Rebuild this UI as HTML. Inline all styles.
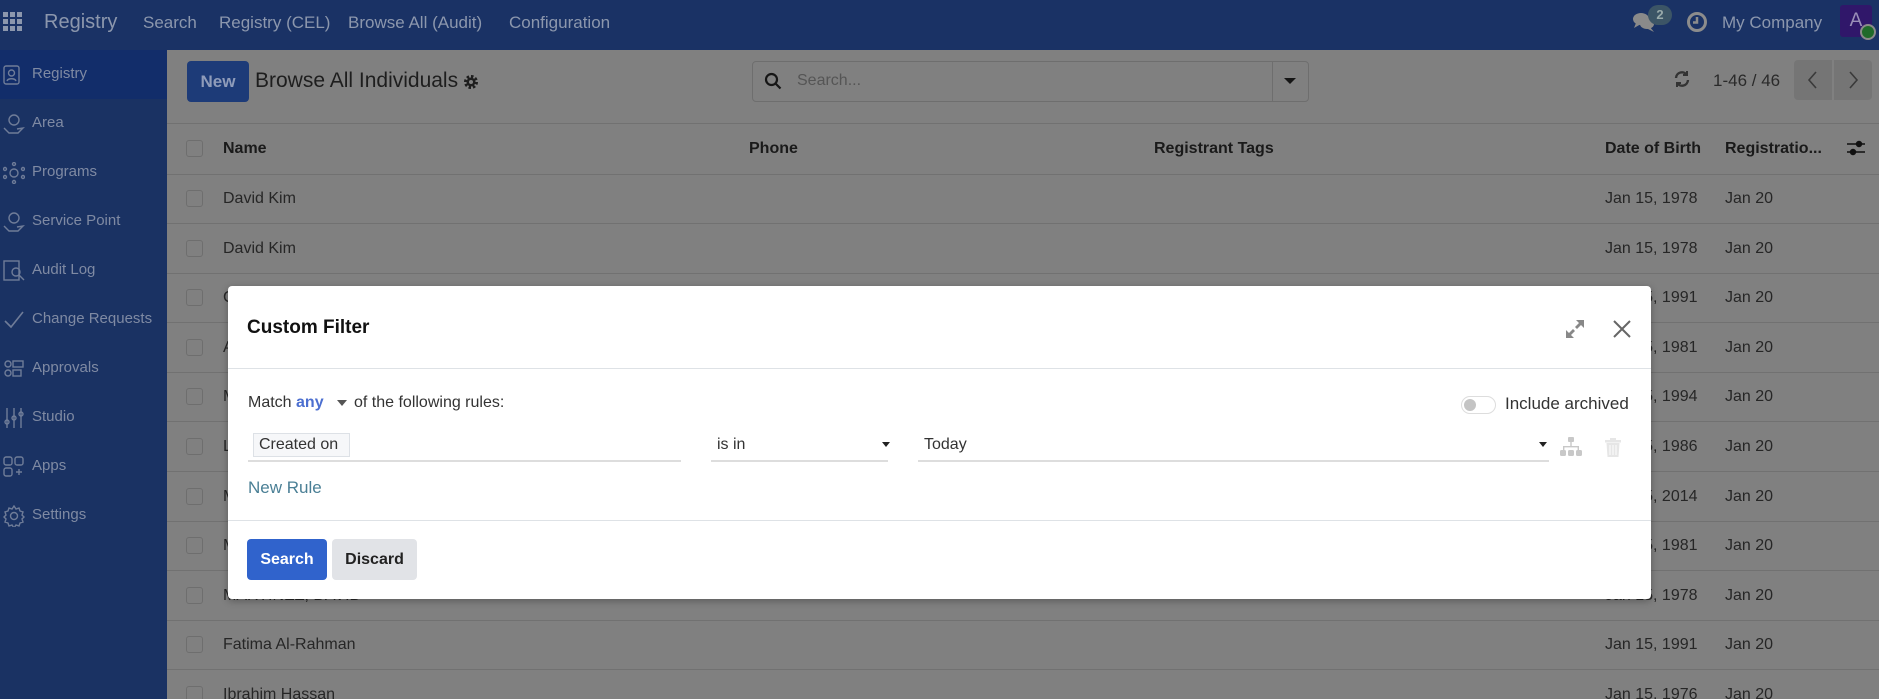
<!DOCTYPE html>
<html><head><meta charset="utf-8"><style>
*{box-sizing:border-box;margin:0;padding:0}
html{width:1879px;height:699px;overflow:hidden}
body{width:1879px;height:699px;overflow:hidden;background:#808080;font-family:"Liberation Sans",sans-serif;font-size:16px;color:#1a1a1a;position:relative}
.a{position:absolute;white-space:nowrap}
.nav{left:0;top:0;width:1879px;height:50px;background:#1a3265}
.nav .t{color:#8c97ad;font-size:17px;top:13px}
.side{left:0;top:50px;width:167px;height:649px;background:#1a3263}
.si{left:0;width:167px;height:49px;color:#7f8aa3;font-size:15px}
.si span{position:absolute;left:32px;top:15px}
.si svg{position:absolute;left:3px;top:14px}
.line{left:167px;width:1712px;height:1px;background:#717171}
.cb{width:17px;height:17px;border:1px solid #6e6e6e;border-radius:3px}
.row{font-size:16px;color:#262626}
.modal{left:228px;top:286px;width:1423px;height:313px;background:#fff;border-radius:4px;box-shadow:0 2px 8px rgba(0,0,0,.3)}
</style></head><body>
<div class="a nav">
<svg class="a" style="left:3px;top:12px" width="20" height="20" viewBox="0 0 20 20" fill="#8c97ad"><rect x="0" y="0" width="5" height="5"/><rect x="7" y="0" width="5" height="5"/><rect x="14" y="0" width="5" height="5"/><rect x="0" y="7" width="5" height="5"/><rect x="7" y="7" width="5" height="5"/><rect x="14" y="7" width="5" height="5"/><rect x="0" y="14" width="5" height="5"/><rect x="7" y="14" width="5" height="5"/><rect x="14" y="14" width="5" height="5"/></svg>
<div class="a t" style="left:44px;top:11px;font-size:20px">Registry</div>
<div class="a t" style="left:143px">Search</div>
<div class="a t" style="left:219px">Registry (CEL)</div>
<div class="a t" style="left:348px">Browse All (Audit)</div>
<div class="a t" style="left:509px">Configuration</div>
<svg class="a" style="left:1632px;top:11px" width="26" height="22" viewBox="0 0 26 22" fill="#8a8a8a"><ellipse cx="9" cy="8" rx="8" ry="6"/><path d="M4 12 L2 17 L9 13Z"/><ellipse cx="15" cy="13" rx="7" ry="5"/><path d="M18 16 L22 21 L14 17Z"/></svg>
<div class="a" style="left:1648px;top:5px;width:24px;height:20px;border-radius:10px;background:#3c5566;color:#9aa;font-size:13px;font-weight:bold;text-align:center;line-height:20px">2</div>
<svg class="a" style="left:1686px;top:11px" width="22" height="22" viewBox="0 0 22 22"><circle cx="11" cy="11" r="8.5" fill="none" stroke="#8c8c8c" stroke-width="3"/><path d="M11 6v5.5h-4" fill="none" stroke="#8c8c8c" stroke-width="2.5"/></svg>
<div class="a t" style="left:1722px">My Company</div>
<div class="a" style="left:1840px;top:5px;width:32px;height:32px;background:#30176a;border-radius:3px;color:#9a8fb8;font-size:19px;text-align:center;line-height:32px">A</div>
<div class="a" style="left:1860px;top:24px;width:16px;height:16px;border-radius:8px;background:#1f6a2a;border:2px solid #8a8a8a"></div>
</div>
<div class="a side">
<div class="a si" style="top:0;background:#122d6a"><svg width="18" height="22" viewBox="0 0 18 22" fill="none" stroke="#6f7c98" stroke-width="1.4"><rect x="1" y="2" width="15" height="18" rx="2"/><circle cx="8.5" cy="9" r="3"/><path d="M4 17c1-3 8-3 9 0"/></svg><span>Registry</span></div>
<div class="a si" style="top:49px"><svg width="22" height="22" viewBox="0 0 22 22" fill="none" stroke="#6f7c98" stroke-width="1.4"><circle cx="11" cy="7" r="5"/><path d="M1 15l5 5h9l5-5-6 1"/></svg><span>Area</span></div>
<div class="a si" style="top:98px"><svg width="22" height="22" viewBox="0 0 22 22" fill="none" stroke="#6f7c98" stroke-width="1.4"><circle cx="11" cy="11" r="4"/><circle cx="11" cy="2" r="1.5"/><circle cx="11" cy="20" r="1.5"/><circle cx="2" cy="7" r="1.5"/><circle cx="20" cy="7" r="1.5"/><circle cx="2" cy="15" r="1.5"/><circle cx="20" cy="15" r="1.5"/></svg><span>Programs</span></div>
<div class="a si" style="top:147px"><svg width="22" height="22" viewBox="0 0 22 22" fill="none" stroke="#6f7c98" stroke-width="1.4"><circle cx="11" cy="7" r="5"/><path d="M1 15l5 5h9l5-5-6 1"/></svg><span>Service Point</span></div>
<div class="a si" style="top:196px"><svg width="22" height="22" viewBox="0 0 22 22" fill="none" stroke="#6f7c98" stroke-width="1.4"><rect x="1" y="1" width="15" height="19"/><circle cx="13" cy="12" r="4"/><path d="M16 15l5 5"/></svg><span>Audit Log</span></div>
<div class="a si" style="top:245px"><svg width="22" height="22" viewBox="0 0 22 22" fill="none" stroke="#6f7c98" stroke-width="1.6"><path d="M2 12l6 6L20 3"/></svg><span>Change Requests</span></div>
<div class="a si" style="top:294px"><svg width="22" height="22" viewBox="0 0 22 22" fill="none" stroke="#6f7c98" stroke-width="1.4"><circle cx="5" cy="6" r="3"/><circle cx="5" cy="15" r="3"/><rect x="10" y="3" width="10" height="6"/><rect x="10" y="12" width="8" height="6"/></svg><span>Approvals</span></div>
<div class="a si" style="top:343px"><svg width="22" height="22" viewBox="0 0 22 22" fill="none" stroke="#6f7c98" stroke-width="1.4"><path d="M4 1v20M11 1v20M18 1v20"/><circle cx="4" cy="15" r="2"/><circle cx="11" cy="11" r="2"/><circle cx="18" cy="7" r="2"/></svg><span>Studio</span></div>
<div class="a si" style="top:392px"><svg width="22" height="22" viewBox="0 0 22 22" fill="none" stroke="#6f7c98" stroke-width="1.4"><rect x="1" y="1" width="8" height="8" rx="2"/><rect x="12" y="1" width="8" height="8" rx="2"/><rect x="1" y="12" width="8" height="8" rx="2"/><path d="M16 13v6M13 16h6"/></svg><span>Apps</span></div>
<div class="a si" style="top:441px"><svg width="22" height="22" viewBox="0 0 22 22" fill="none" stroke="#6f7c98" stroke-width="1.4"><circle cx="11" cy="11" r="3.5"/><path d="M11 1l2 3 3-1 1 3 3 1-1 3 2 2-2 2 1 3-3 1-1 3-3-1-2 3-2-3-3 1-1-3-3-1 1-3-2-2 2-2-1-3 3-1 1-3 3 1z"/></svg><span>Settings</span></div>
</div>
<div class="a" style="left:187px;top:61px;width:62px;height:41px;background:#1d3b78;border-radius:4px;color:#8f9cba;font-weight:bold;font-size:17px;text-align:center;line-height:41px">New</div>
<div class="a" style="left:255px;top:69px;font-size:21px;color:#1e1e1e">Browse All Individuals</div>
<svg class="a" style="left:463px;top:74px" width="16" height="16" viewBox="0 0 16 16"><circle cx="8" cy="8" r="5" fill="none" stroke="#1e1e1e" stroke-width="4" stroke-dasharray="2.2 1.7"/><circle cx="8" cy="8" r="4.5" fill="#1e1e1e"/><circle cx="8" cy="8" r="2" fill="#808080"/></svg>
<div class="a" style="left:752px;top:61px;width:557px;height:41px;border:1px solid #6e6e6e;border-radius:4px"></div>
<div class="a" style="left:1272px;top:62px;width:1px;height:39px;background:#6e6e6e"></div>
<svg class="a" style="left:764px;top:72px" width="18" height="18" viewBox="0 0 18 18" fill="none" stroke="#161616" stroke-width="2.2"><circle cx="7.5" cy="7.5" r="5.5"/><path d="M11.5 11.5l5 5"/></svg>
<div class="a" style="left:797px;top:72px;color:#555;font-size:16px">Search...</div>
<div class="a" style="left:1284px;top:78px;border-left:6px solid transparent;border-right:6px solid transparent;border-top:6px solid #151515"></div>
<svg class="a" style="left:1673px;top:70px" width="18" height="18" viewBox="0 0 18 18" fill="none" stroke="#333" stroke-width="2.4"><path d="M3 8a6 6 0 0 1 11-3M15 10a6 6 0 0 1-11 3"/><path d="M14 1v4h-4M4 17v-4h4" stroke-width="2"/></svg>
<div class="a" style="left:1713px;top:71px;font-size:17px;color:#2a2a2a">1-46 / 46</div>
<div class="a" style="left:1794px;top:60px;width:38px;height:40px;background:#757575;border-radius:4px 0 0 4px"></div>
<div class="a" style="left:1834px;top:60px;width:38px;height:40px;background:#757575;border-radius:0 4px 4px 0"></div>
<svg class="a" style="left:1806px;top:70px" width="14" height="20" viewBox="0 0 14 20" fill="none" stroke="#3a3a3a" stroke-width="1.6"><path d="M10 2L3 10l7 8"/></svg>
<svg class="a" style="left:1846px;top:70px" width="14" height="20" viewBox="0 0 14 20" fill="none" stroke="#3a3a3a" stroke-width="1.6"><path d="M4 2l7 8-7 8"/></svg>
<div class="a line" style="top:123px"></div>
<div class="a line" style="top:174px"></div>
<div class="a cb" style="left:186px;top:140px"></div>
<div class="a" style="left:223px;top:140px;font-weight:bold">Name</div>
<div class="a" style="left:749px;top:140px;font-weight:bold">Phone</div>
<div class="a" style="left:1154px;top:140px;font-weight:bold">Registrant Tags</div>
<div class="a" style="left:1605px;top:140px;font-weight:bold">Date of Birth</div>
<div class="a" style="left:1725px;top:140px;font-weight:bold">Registratio...</div>
<svg class="a" style="left:1846px;top:139px" width="20" height="18" viewBox="0 0 20 18" fill="none" stroke="#111" stroke-width="1.5"><path d="M1 5h18M1 13h18"/><circle cx="13" cy="5" r="2.5" fill="#111"/><circle cx="7" cy="13" r="2.5" fill="#111"/></svg>
<div id="rows"></div>
<div class="a modal">
<div class="a" style="left:19px;top:31px;font-size:19px;font-weight:bold;color:#111">Custom Filter</div>
<svg class="a" style="left:1336px;top:32px" width="22" height="22" viewBox="0 0 22 22" fill="#888"><path d="M12 2h8v8l-3-3-4 4-2-2 4-4z"/><path d="M10 20H2v-8l3 3 4-4 2 2-4 4z"/></svg>
<svg class="a" style="left:1384px;top:33px" width="20" height="20" viewBox="0 0 20 20" stroke="#666" stroke-width="2"><path d="M2 2l16 16M18 2L2 18"/></svg>
<div class="a" style="left:0;top:82px;width:1423px;height:1px;background:#dee2e6"></div>
<div class="a" style="left:20px;top:108px;color:#333">Match <b style="color:#4c6fd0">any</b></div>
<div class="a" style="left:109px;top:114px;border-left:5px solid transparent;border-right:5px solid transparent;border-top:6px solid #555"></div>
<div class="a" style="left:126px;top:108px;color:#333">of the following rules:</div>
<div class="a" style="left:1233px;top:110px;width:35px;height:18px;border:1px solid #ddd;border-radius:9px"></div>
<div class="a" style="left:1236px;top:113px;width:12px;height:12px;border-radius:6px;background:#c4c4c4"></div>
<div class="a" style="left:1277px;top:108px;color:#333;font-size:17px">Include archived</div>
<div class="a" style="left:25px;top:147px;width:97px;height:24px;background:#f6f7f9;border:1px solid #dde1e6"></div>
<div class="a" style="left:31px;top:150px;color:#333">Created on</div>
<div class="a" style="left:20px;top:174px;width:433px;height:2px;background:#ddd"></div>
<div class="a" style="left:489px;top:150px;color:#333">is in</div>
<div class="a" style="left:654px;top:156px;border-left:4px solid transparent;border-right:4px solid transparent;border-top:5px solid #222"></div>
<div class="a" style="left:483px;top:174px;width:177px;height:2px;background:#ddd"></div>
<div class="a" style="left:696px;top:150px;color:#333">Today</div>
<div class="a" style="left:1311px;top:156px;border-left:4px solid transparent;border-right:4px solid transparent;border-top:5px solid #222"></div>
<div class="a" style="left:690px;top:174px;width:631px;height:2px;background:#ddd"></div>
<svg class="a" style="left:1332px;top:151px" width="22" height="20" viewBox="0 0 22 20" fill="#c8c8c8"><rect x="8" y="0" width="6" height="5" rx="1"/><path d="M10.3 5h1.4v4H19v4h-1.4v-2.6H4.4V13H3V9h7.3z"/><rect x="0" y="13" width="6" height="6" rx="1.5"/><rect x="8" y="13" width="6" height="6" rx="1.5"/><rect x="16" y="13" width="6" height="6" rx="1.5"/></svg>
<svg class="a" style="left:1377px;top:152px" width="16" height="19" viewBox="0 0 16 19" fill="#e6e6e6"><rect x="0" y="2" width="16" height="2.5"/><rect x="5" y="0" width="6" height="2"/><path d="M1.5 5h13l-1 14h-11z"/><path d="M5 7v10M8 7v10M11 7v10" stroke="#fff" stroke-width="1"/></svg>
<div class="a" style="left:20px;top:192px;color:#4a7f95;font-size:17px">New Rule</div>
<div class="a" style="left:0;top:234px;width:1423px;height:1px;background:#dee2e6"></div>
<div class="a" style="left:19px;top:253px;width:80px;height:41px;background:#3063cc;border-radius:4px;color:#fff;font-weight:bold;text-align:center;line-height:41px">Search</div>
<div class="a" style="left:104px;top:253px;width:85px;height:41px;background:#e1e3e7;border-radius:4px;color:#222;font-weight:bold;text-align:center;line-height:41px">Discard</div>
</div>
<script>
var names=["David Kim","David Kim","C","A","M","L","M","M","MARTINEZ, DAVID","Fatima Al-Rahman","Ibrahim Hassan"];
var yrs=["1978","1978","1991","1981","1994","1986","2014","1981","1978","1991","1976"];
var h="";
for(var i=0;i<names.length;i++){var t=174+i*49.6;
if(t+49<699)h+='<div class="a line" style="top:'+(t+49)+'px"></div>';
h+='<div class="a cb" style="left:186px;top:'+(t+16)+'px"></div>';
h+='<div class="a row" style="left:223px;top:'+(t+16)+'px">'+names[i]+'</div>';
h+='<div class="a row" style="left:1605px;top:'+(t+16)+'px">Jan 15, '+yrs[i]+'</div>';
h+='<div class="a row" style="left:1725px;top:'+(t+16)+'px">Jan 20</div>';}
document.getElementById("rows").innerHTML=h;
</script>
</body></html>
